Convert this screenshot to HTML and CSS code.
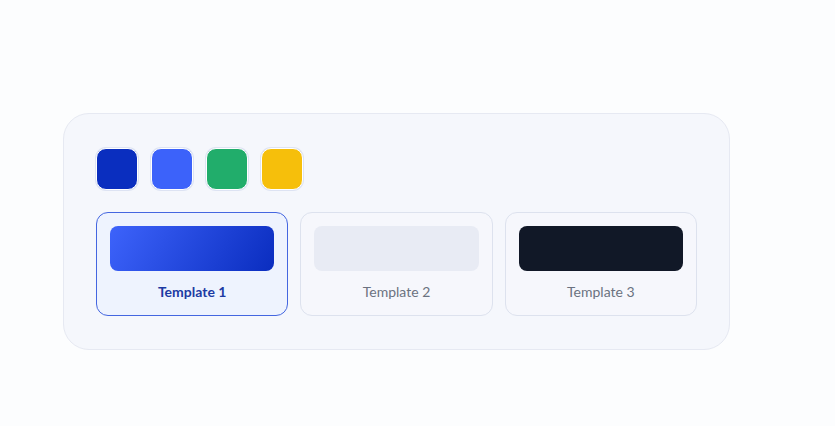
FILE: index.html
```html
<!DOCTYPE html>
<html lang="en">
<head>
<meta charset="utf-8">
<title>Templates</title>
<link rel="stylesheet" href="styles.css">
</head>
<body>
<div class="page">
  <section class="panel">
    <div class="swatches">
      <button class="swatch swatch-navy" aria-label="Navy"></button>
      <button class="swatch swatch-blue" aria-label="Blue"></button>
      <button class="swatch swatch-green" aria-label="Green"></button>
      <button class="swatch swatch-yellow" aria-label="Yellow"></button>
    </div>
    <div class="templates">
      <div class="card card-active">
        <div class="preview preview-gradient"></div>
        <div class="label">Template 1</div>
      </div>
      <div class="card">
        <div class="preview preview-light"></div>
        <div class="label">Template 2</div>
      </div>
      <div class="card">
        <div class="preview preview-dark"></div>
        <div class="label">Template 3</div>
      </div>
    </div>
  </section>
</div>
</body>
</html>
```
FILE: styles.css
```css
* { box-sizing: border-box; }
html, body { margin: 0; padding: 0; }
body {
  background: #fcfdfe;
  font-family: "Lato", "Open Sans", sans-serif;
  width: 835px;
  height: 426px;
  overflow: hidden;
}
.page {
  padding: 113px 0 0 63px;
}
.panel {
  width: 667px;
  height: 237px;
  background: #f5f7fc;
  border: 1px solid #e6e9f2;
  border-radius: 26px;
  padding: 34px 32px 33px 32px;
}
.swatches {
  display: flex;
  gap: 13px;
  margin-bottom: 22px;
}
.swatch {
  width: 42px;
  height: 42px;
  padding: 0;
  border: 1px solid #ffffff;
  border-radius: 10px;
  box-shadow: 0 0 0 1px #dde3f3;
  cursor: pointer;
}
.swatch-navy { background: #0a2ebf; }
.swatch-blue { background: #3c62fa; }
.swatch-green { background: #21ad6b; }
.swatch-yellow { background: #f6bf0b; }
.templates {
  display: grid;
  grid-template-columns: repeat(3, 1fr);
  gap: 12px;
}
.card {
  height: 104px;
  border: 1px solid #dde2ee;
  border-radius: 12px;
  background: #f6f7fc;
  padding: 13px 13px 0 13px;
  display: flex;
  flex-direction: column;
  align-items: stretch;
}
.card-active {
  border-color: #4466e0;
  background: #eef3fe;
}
.preview {
  height: 45px;
  border-radius: 8px;
}
.preview-gradient { background: linear-gradient(120deg, #3d63fb 0%, #0a2dbf 100%); }
.preview-light { background: #e8ebf4; }
.preview-dark { background: #111827; }
.label {
  margin-top: 11px;
  text-align: center;
  font-size: 14px;
  line-height: 20px;
  color: #6b7280;
}
.card-active .label {
  color: #1c3aa3;
  font-weight: 700;
}
```
